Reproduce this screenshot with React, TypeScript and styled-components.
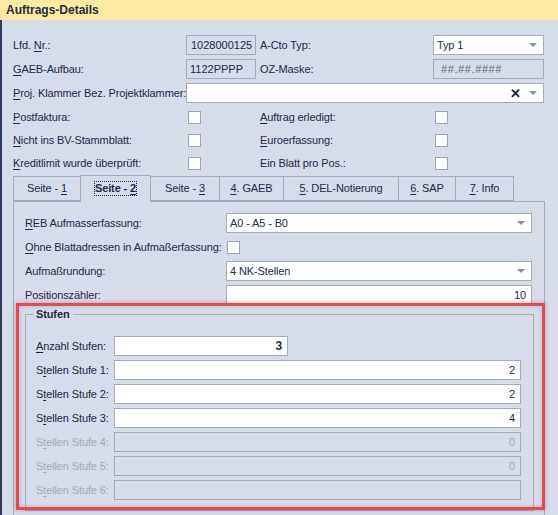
import styled, { createGlobalStyle } from 'styled-components';

const GlobalStyle = createGlobalStyle`
  html, body {
    margin: 0;
    padding: 0;
    background: #d6dce9;
  }
  body {
    font-family: "Liberation Sans", Arial, sans-serif;
    font-size: 11px;
    letter-spacing: -0.12px;
    color: #1e2a46;
  }
`;

const Window = styled.div`
  position: relative;
  width: 558px;
  height: 515px;
  overflow: hidden;
  background: #d6dce9;
`;

const Header = styled.div`
  height: 20px;
  line-height: 21px;
  padding-left: 6px;
  background: #fdea9e;
  font-weight: bold;
  font-size: 12px;
  letter-spacing: 0;
  color: #1d2a4c;
`;

const Body = styled.div`
  box-sizing: border-box;
  height: 495px;
  border-left: 2px solid #2b3a5e;
  padding: 15px 13px 0 11px;
`;

const FieldGrid = styled.div`
  display: grid;
  grid-template-columns: 173px 70px 177px 111px;
  grid-auto-rows: 20px;
  row-gap: 4px;
  align-items: center;
`;

const CheckGrid = styled(FieldGrid)`
  row-gap: 3px;
  margin-top: 4px;
`;

const Label = styled.span<{ $indent?: number; $disabled?: boolean }>`
  padding-left: ${p => p.$indent ?? 0}px;
  white-space: nowrap;
  color: ${p => (p.$disabled ? '#a3abbb' : 'inherit')};
`;

const U = styled.u`
  text-decoration: underline;
  text-underline-offset: 2px;
`;

const ReadOnly = styled.div<{ $grey?: boolean }>`
  box-sizing: border-box;
  height: 20px;
  line-height: 18px;
  border: 1px solid #a4acb9;
  padding: 0 4px;
  color: ${p => (p.$grey ? '#5e6778' : 'inherit')};
  letter-spacing: ${p => (p.$grey ? '0.6px' : '0')};
  white-space: nowrap;
`;

const Select = styled.div<{ $span?: string }>`
  box-sizing: border-box;
  height: 20px;
  display: flex;
  align-items: center;
  gap: 8px;
  padding: 0 6px 0 3px;
  background: #fff;
  border: 1px solid #a4acb9;
  grid-column: ${p => p.$span ?? 'auto'};
`;

const SelectText = styled.span`
  flex: 1;
  white-space: nowrap;
`;

const Arrow = styled.span`
  width: 0;
  height: 0;
  border-left: 4px solid transparent;
  border-right: 4px solid transparent;
  border-top: 4px solid #858d9b;
`;

const Clear = styled.span`
  font-weight: bold;
  font-size: 13px;
  color: #1d2233;
  line-height: 1;
`;

const Check = styled.span`
  box-sizing: border-box;
  display: block;
  width: 13px;
  height: 13px;
  margin-left: 2px;
  background: #fff;
  border: 1px solid #9da5b4;
`;

const TabStrip = styled.div`
  display: flex;
  align-items: flex-end;
  height: 26px;
  margin-top: 2px;
  padding-left: 1px;
`;

const Tab = styled.div<{ $w: number; $active?: boolean }>`
  box-sizing: border-box;
  width: ${p => p.$w}px;
  height: ${p => (p.$active ? 27 : 25)}px;
  margin-left: -1px;
  margin-bottom: ${p => (p.$active ? -1 : 0)}px;
  border: 1px solid #a3abbd;
  border-bottom: ${p => (p.$active ? 'none' : '1px solid #a3abbd')};
  background: #d6dce9;
  position: relative;
  z-index: ${p => (p.$active ? 1 : 0)};
  display: flex;
  justify-content: center;
  padding-top: ${p => (p.$active ? 6 : 5)}px;
  font-weight: ${p => (p.$active ? 'bold' : 'normal')};
  white-space: nowrap;
`;

const Focus = styled.span`
  outline: 1px dotted #1e2a46;
  outline-offset: 0;
  height: 13px;
  line-height: 13px;
`;

const Panel = styled.div`
  box-sizing: border-box;
  height: 320px;
  border: 1px solid #a3abbd;
  border-bottom: none;
  padding: 11px 0 0 11px;
`;

const PanelGrid = styled.div`
  display: grid;
  grid-template-columns: 201px 306px;
  grid-auto-rows: 20px;
  row-gap: 4px;
  align-items: center;
`;

const NumInput = styled.div<{ $disabled?: boolean; $w?: number; $bold?: boolean }>`
  box-sizing: border-box;
  height: 20px;
  width: ${p => (p.$w ? `${p.$w}px` : 'auto')};
  line-height: 18px;
  padding: 0 5px;
  text-align: right;
  background: ${p => (p.$disabled ? 'transparent' : '#fff')};
  border: 1px solid #a4acb9;
  color: ${p => (p.$disabled ? '#a3abbb' : 'inherit')};
  font-weight: ${p => (p.$bold ? 'bold' : 'normal')};
  font-size: ${p => (p.$bold ? '12px' : '11px')};
`;

const Group = styled.fieldset`
  box-sizing: border-box;
  margin: 3px 10px 0 0;
  border: 1px solid #a6aebf;
  padding: 0 12px 10px 10px;
  min-width: 0;
`;

const Legend = styled.legend`
  font-weight: bold;
  padding: 0 3px;
  margin-left: -3px;
  line-height: 13px;
`;

const GroupGrid = styled.div`
  display: grid;
  grid-template-columns: 78px 1fr;
  grid-auto-rows: 20px;
  row-gap: 4px;
  align-items: center;
  margin-top: 15px;
`;

const Highlight = styled.div`
  position: absolute;
  left: 16px;
  top: 303px;
  width: 529px;
  height: 207px;
  box-sizing: border-box;
  border: 3px solid #f24545;
  box-shadow: 0 0 4px rgba(40, 50, 70, 0.35), inset 0 0 4px rgba(40, 50, 70, 0.25);
  pointer-events: none;
`;

const tabs: { w: number; pre?: string; key: string; post?: string; active?: boolean }[] = [
  { w: 68, pre: 'Seite - ', key: '1' },
  { w: 71, pre: 'Seite - ', key: '2', active: true },
  { w: 70, pre: 'Seite - ', key: '3' },
  { w: 65, key: '4', post: '. GAEB' },
  { w: 116, key: '5', post: '. DEL-Notierung' },
  { w: 58, key: '6', post: '. SAP' },
  { w: 59, key: '7', post: '. Info' },
];

const stufen = [
  { n: 1, v: '2' },
  { n: 2, v: '2' },
  { n: 3, v: '4' },
  { n: 4, v: '0', off: true },
  { n: 5, v: '0', off: true },
  { n: 6, v: '', off: true },
];

const App = () => {
  return (
    <Window>
      <GlobalStyle />
      <Header>Auftrags-Details</Header>
      <Body>
        <FieldGrid>
          <Label>Lfd. <U>N</U>r.:</Label>
          <ReadOnly>1028000125</ReadOnly>
          <Label $indent={4}>A-Cto Typ:</Label>
          <Select>
            <SelectText>Typ 1</SelectText>
            <Arrow />
          </Select>

          <Label><U>G</U>AEB-Aufbau:</Label>
          <ReadOnly style={{ paddingLeft: 3 }}>1122PPPP</ReadOnly>
          <Label $indent={4}>OZ-Maske:</Label>
          <ReadOnly $grey style={{ paddingLeft: 7 }}>##.##.####</ReadOnly>

          <Label><U>P</U>roj. Klammer Bez. Projektklammer:</Label>
          <Select $span="2 / 5">
            <SelectText />
            <Clear>✕</Clear>
            <Arrow />
          </Select>
        </FieldGrid>

        <CheckGrid>
          <Label><U>P</U>ostfaktura:</Label>
          <Check />
          <Label $indent={4}><U>A</U>uftrag erledigt:</Label>
          <Check />

          <Label><U>N</U>icht ins BV-Stammblatt:</Label>
          <Check />
          <Label $indent={4}><U>E</U>uroerfassung:</Label>
          <Check />

          <Label><U>K</U>reditlimit wurde überprüft:</Label>
          <Check />
          <Label $indent={4}>Ein Blatt pro Pos.:</Label>
          <Check />
        </CheckGrid>

        <TabStrip>
          {tabs.map(t => {
            const text = (
              <>
                {t.pre}
                <U>{t.key}</U>
                {t.post}
              </>
            );
            return (
              <Tab key={t.key} $w={t.w} $active={t.active}>
                {t.active ? <Focus>{text}</Focus> : <span>{text}</span>}
              </Tab>
            );
          })}
        </TabStrip>

        <Panel>
          <PanelGrid>
            <Label><U>R</U>EB Aufmasserfassung:</Label>
            <Select>
              <SelectText>A0 - A5 - B0</SelectText>
              <Arrow />
            </Select>

            <Label><U>O</U>hne Blattadressen in Aufmaßerfassung:</Label>
            <Check style={{ marginLeft: 1 }} />

            <Label>Aufmaßrundung:</Label>
            <Select>
              <SelectText>4 NK-Stellen</SelectText>
              <Arrow />
            </Select>

            <Label>Positionszähler:</Label>
            <NumInput>10</NumInput>
          </PanelGrid>

          <Group>
            <Legend>Stufen</Legend>
            <GroupGrid>
              <Label><U>A</U>nzahl Stufen:</Label>
              <NumInput $w={174} $bold>3</NumInput>
              {stufen.map(s => (
                <>
                  <Label key={`l${s.n}`} $disabled={s.off}>
                    S<U>t</U>ellen Stufe {s.n}:
                  </Label>
                  <NumInput key={`i${s.n}`} $disabled={s.off}>{s.v}</NumInput>
                </>
              ))}
            </GroupGrid>
          </Group>
        </Panel>
      </Body>
      <Highlight />
    </Window>
  );
};

export default App;
